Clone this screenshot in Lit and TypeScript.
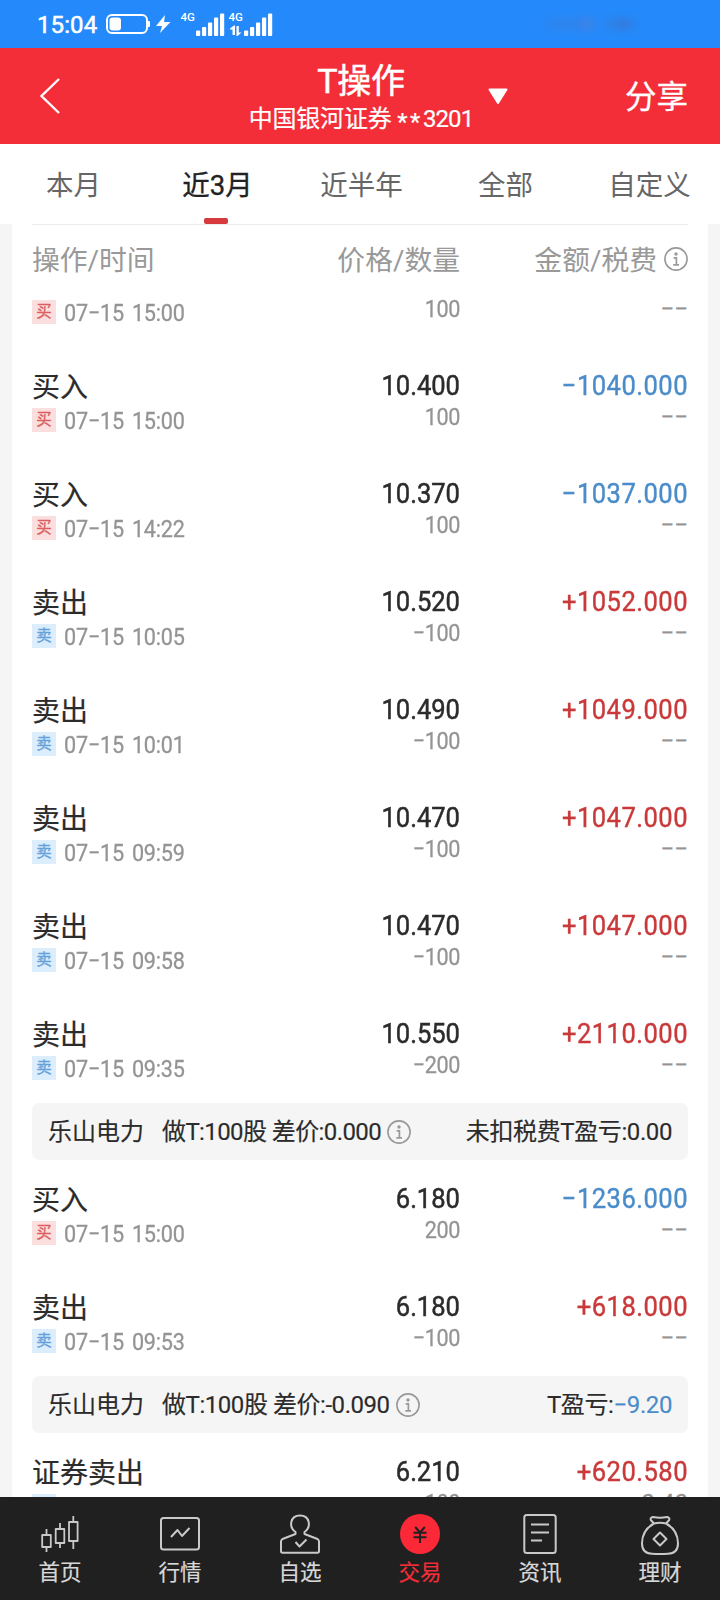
import { LitElement, html, css, svg, nothing } from "lit";
import { customElement, property } from "lit/decorators.js";

type Side = "buy" | "sell";
interface Trade { name: string; side: Side; time: string; price: string; qty: string; amount: string; fee: string; continued?: boolean; }
interface Summary { stock: string; detail: string; label: string; value: string; loss?: boolean; }
interface Group { trades: Trade[]; summary?: Summary; }

const buy = (time: string, price: string, qty: string, amount: string): Trade =>
  ({ name: "买入", side: "buy", time, price, qty, amount, fee: "−−" });
const sell = (time: string, price: string, qty: string, amount: string): Trade =>
  ({ name: "卖出", side: "sell", time, price, qty, amount, fee: "−−" });

const GROUPS: Group[] = [
  {
    trades: [
      { ...buy("07−15 15:00", "", "100", ""), continued: true },
      buy("07−15 15:00", "10.400", "100", "−1040.000"),
      buy("07−15 14:22", "10.370", "100", "−1037.000"),
      sell("07−15 10:05", "10.520", "−100", "+1052.000"),
      sell("07−15 10:01", "10.490", "−100", "+1049.000"),
      sell("07−15 09:59", "10.470", "−100", "+1047.000"),
      sell("07−15 09:58", "10.470", "−100", "+1047.000"),
      sell("07−15 09:35", "10.550", "−200", "+2110.000"),
    ],
    summary: { stock: "乐山电力", detail: "做T:100股 差价:0.000", label: "未扣税费T盈亏:", value: "0.00" },
  },
  {
    trades: [
      buy("07−15 15:00", "6.180", "200", "−1236.000"),
      sell("07−15 09:53", "6.180", "−100", "+618.000"),
    ],
    summary: { stock: "乐山电力", detail: "做T:100股 差价:-0.090", label: "T盈亏:", value: "−9.20", loss: true },
  },
  { trades: [{ ...sell("", "6.210", "100", "+620.580"), name: "证券卖出", fee: "0.40" }] },
];

const FONT = css`
  :host { font-family: Roboto, "Noto Sans CJK SC", sans-serif; }
  * { box-sizing: border-box; }
`;

@customElement("info-icon")
export class InfoIcon extends LitElement {
  static styles = css`:host { display: block; width: 24px; height: 24px; color: #999; } svg { display: block; }`;
  render() {
    return html`<svg width="24" height="24" viewBox="0 0 24 24" fill="none" stroke="currentColor">
      <circle cx="12" cy="12" r="11.1" stroke-width="1.6"/>
      <circle cx="12" cy="7" r="1.7" fill="currentColor" stroke="none"/>
      <path d="M9.6 10.8H12.4V17.4M9.3 17.8H15" stroke-width="1.7"/>
    </svg>`;
  }
}

@customElement("status-bar")
export class StatusBar extends LitElement {
  static styles = [FONT, css`
    :host { display: flex; align-items: center; height: 48px; background: #248afb; color: #fff; padding-left: 37px; }
    .time { width: 68px; font-size: 24px; line-height: 48px; padding-top: 1px; -webkit-text-stroke: .5px #fff; letter-spacing: 0.1px; white-space: nowrap; }
    svg { display: block; }
    .smudge { margin-left: 268px; width: 94px; height: 12px; filter: blur(4px); opacity: .4;
      background: linear-gradient(90deg, #2d82ec, #4a78cd 25%, #2f7fe0 35%, #7a72b8 45%, #2488fb 60%, #3d76c8 74%, #5060a8 88%, #2d82ec); }
  `];
  render() {
    const bars = (x: number) => [0, 1, 2, 3, 4].map((i) => {
      const h = [5.5, 9, 13.5, 18.5, 22.5][i];
      return svg`<rect x=${x + i * 6} y=${36 - h} width="4.2" height=${h} rx="1"/>`;
    });
    return html`
      <span class="time">15:04</span>
      <svg width="170" height="48" viewBox="105 0 170 48" fill="#fff">
        <rect x="107" y="15" width="40" height="18" rx="5" fill="none" stroke="#fff" stroke-width="2"/>
        <rect x="109.5" y="17.5" width="11.5" height="13" rx="3"/>
        <rect x="147.500" y="21" width="2.5" height="6" rx="1"/>
        <path d="M165 15L156 26H162L160 33L170.5 22H164Z"/>
        <text x="180.500" y="21" font-size="11.5" font-weight="500">4G</text>
        ${bars(196)}
        <text x="228.500" y="21" font-size="11.5" font-weight="500">4G</text>
        <path d="M230 28.500L234 25.500H235V35H232.500V29.500H230ZM236.500 26H238.800V32.500H241.500L237.500 36H236.500Z"/>
        ${bars(244)}
      </svg>
      <span class="smudge"></span>`;
  }
}

@customElement("title-bar")
export class TitleBar extends LitElement {
  static styles = [FONT, css`
    :host { display: grid; grid-template-columns: 224px 274px 1fr auto; align-items: center; height: 96px; background: #f32e38; color: #fff; padding-right: 32px; }
    .back { padding-left: 39px; }
    svg { display: block; }
    .mid { display: flex; flex-direction: column; align-items: center; height: 96px; padding-top: 12px; white-space: nowrap; }
    .title { font-size: 34px; line-height: 42px; -webkit-text-stroke: .5px #fff; letter-spacing: -.2px; }
    .acct { font-size: 24px; line-height: 34px; letter-spacing: -.2px; -webkit-text-stroke: .2px #fff; }
    .stars { letter-spacing: 2.5px; line-height: 1; vertical-align: -3px; }
    .num { letter-spacing: -.9px; }
    .arrow { margin-left: -10px; }
    .share { font-size: 31.5px; line-height: 40px; padding-top: 4px; -webkit-text-stroke: .3px #fff; }
  `];
  render() {
    return html`
      <div class="back"><svg width="22" height="38" viewBox="0 0 22 38" fill="none" stroke="#fff" stroke-width="2.4"><path d="M20 2L2.5 19L20 36"/></svg></div>
      <div class="mid"><div class="title">T操作</div><div class="acct">中国银河证券 <span class="stars">**</span><span class="num">3201</span></div></div>
      <div class="arrow"><svg width="20" height="17" viewBox="0 0 20 17" fill="#fff" stroke="#fff" stroke-width="2" stroke-linejoin="round"><path d="M1.5 1.5H18.5L10 15Z"/></svg></div>
      <div class="share">分享</div>`;
  }
}

@customElement("period-tabs")
export class PeriodTabs extends LitElement {
  static styles = [FONT, css`
    :host { display: grid; grid-template-columns: repeat(5, 1fr); height: 80px; background: #fff; }
    .tab { display: flex; flex-direction: column; align-items: center; justify-content: space-between; padding: 22px 0 0 3px; font-size: 27.5px; line-height: 40px; color: #666; }
    .on { color: #222; padding-left: 0; }
    .on .label { -webkit-text-stroke: .3px #222; padding-left: 3px; }
    .mark { width: 24px; height: 6px; border-radius: 2px; background: #d63a3c; }
  `];
  render() {
    return ["本月", "近3月", "近半年", "全部", "自定义"].map((t, i) => html`
      <div class="tab ${i === 1 ? "on" : ""}"><span class="label">${t}</span>${i === 1 ? html`<span class="mark"></span>` : nothing}</div>`);
  }
}

@customElement("trade-row")
export class TradeRow extends LitElement {
  @property({ attribute: false }) trade!: Trade;
  static styles = [FONT, css`
    :host { display: block; margin-bottom: 41px; }
    .row { display: grid; grid-template-columns: 228px 200px 1fr; white-space: nowrap; }
    .name { font-size: 28px; line-height: 43px; height: 43px; padding-top: 1px; color: #2b2b2b; -webkit-text-stroke: .2px currentColor; }
    .when { display: flex; align-items: center; gap: 8px; height: 24px; font-size: 24px; color: #949494; }
    .date { display: inline-block; transform: scaleX(.9); transform-origin: left; letter-spacing: -.2px; word-spacing: 3px; line-height: 24px; padding-top: 2px; -webkit-text-stroke: .3px currentColor; }
    .tag { width: 24px; height: 24px; font-size: 15.5px; line-height: 25px; text-align: center; -webkit-text-stroke: .3px currentColor; }
    .tag.buy { background: #fbdfdf; color: #d9605f; }
    .tag.sell { background: #dcedfc; color: #64a0da; }
    .col { text-align: right; }
    .big { font-size: 27.5px; line-height: 40px; height: 40px; padding-top: 1px; transform: scaleX(.93); transform-origin: right; -webkit-text-stroke: .5px currentColor; color: #2b2b2b; }
    .small { font-size: 24px; line-height: 24px; height: 24px; color: #949494; transform: scaleX(.9); transform-origin: right; -webkit-text-stroke: .3px currentColor; letter-spacing: -.4px; }
    .amt { -webkit-text-stroke: .4px currentColor; letter-spacing: .5px; }
    .amt.buy { color: #4a8cca; }
    .amt.sell { color: #c9393a; }
    .fee { transform: none; letter-spacing: 0; }
    .continued .small { margin-top: -3px; }
  `];
  render() {
    const t = this.trade;
    return html`<div class="row ${t.continued ? "continued" : ""}">
      <div>
        ${t.continued ? nothing : html`<div class="name">${t.name}</div>`}
        <div class="when"><span class="tag ${t.side}">${!t.time ? nothing : t.side === "buy" ? "买" : "卖"}</span><span class="date">${t.time}</span></div>
      </div>
      <div class="col">${t.continued ? nothing : html`<div class="big">${t.price}</div>`}<div class="small">${t.qty}</div></div>
      <div class="col">${t.continued ? nothing : html`<div class="big amt ${t.side}">${t.amount}</div>`}<div class="small fee">${t.fee}</div></div>
    </div>`;
  }
}

@customElement("group-summary")
export class GroupSummary extends LitElement {
  @property({ attribute: false }) data!: Summary;
  static styles = [FONT, css`
    :host { display: flex; align-items: center; height: 57px; margin: -18px 0 18px; padding: 0 16px; border-radius: 7px; background: #f5f5f5; font-size: 24px; line-height: 34px; color: #2b2b2b; white-space: nowrap; }
    span { -webkit-text-stroke: .15px currentColor; }
    .stock, .detail, .pl { padding-top: 1px; }
    .stock { width: 114px; }
    .detail { letter-spacing: -.6px; margin-right: 6px; }
    .detail.wide { letter-spacing: -.45px; }
    .pl { margin-left: auto; letter-spacing: -.4px; }
    .loss { color: #4a8cca; }
  `];
  render() {
    const d = this.data;
    return html`<span class="stock">${d.stock}</span><span class="detail ${d.loss ? "wide" : ""}">${d.detail}</span><info-icon></info-icon>
      <span class="pl">${d.label}<span class=${d.loss ? "loss" : ""}>${d.value}</span></span>`;
  }
}

const NAV_ICONS = [
  svg`<g stroke-width="1.800"><path d="M6.500 15V21M6.500 33V38M20 9V15M20 29V34M33.300 2V8M33.300 27V35"/><rect x="2.200" y="21" width="8.600" height="12"/><rect x="15.700" y="15" width="8.600" height="14"/><rect x="29" y="8" width="8.600" height="19"/></g>`,
  svg`<rect x="1" y="4" width="38" height="31.500" rx="2.500"/><path d="M11 23L17.500 16L22 22L29.500 14"/>`,
  svg`<path d="M15.500 18C8.500 13 10 1.500 20 1.500S31.500 13 24.500 18V20L37.500 25Q39 26 39 27.500V37Q39 38.800 37.500 38.800H2.500Q1 38.800 1 37V27.500Q1 26 2.500 25L15.500 20Z"/><path d="M15.500 28L19.500 32.500L26.500 25.500"/>`,
  svg`<circle cx="20" cy="20" r="20" fill="#fb2837" stroke="none"/><path d="M15.200 13L20 18.500L24.800 13M13.500 18.800H26.500M13.500 23.300H26.500M20 18.500V29" stroke="#202020"/>`,
  svg`<rect x="4.300" y="1" width="31.400" height="38" rx="2.500"/><path d="M11 10.500H29M11 18.500H29M11 26.500H22"/>`,
  svg`<path d="M14 9.500L10.800 6Q10 3.500 13 3Q20 4.500 27 3Q30 3.500 29.200 6L26 9.500M14 9.500C5.500 14 2 22 2 29.500Q2 39.500 12 39.800Q20 40.300 28 39.800Q38 39.500 38 29.500C38 22 34.500 14 26 9.500Q20 7.800 14 9.500Z"/><path d="M20 18.500L26.500 25L20 31.500L13.500 25Z"/>`,
];

@customElement("bottom-nav")
export class BottomNav extends LitElement {
  static styles = [FONT, css`
    :host { display: grid; grid-template-columns: repeat(6, 1fr); height: 103px; background: #202020; }
    .item { display: flex; flex-direction: column; align-items: center; padding-top: 17px; color: #d8d8d8; font-size: 21.5px; line-height: 30px; gap: 4px; }
    .item span { -webkit-text-stroke: .2px currentColor; }
    .on { color: #f32e38; }
    svg { display: block; overflow: visible; }
  `];
  render() {
    return ["首页", "行情", "自选", "交易", "资讯", "理财"].map((t, i) => html`
      <div class="item ${i === 3 ? "on" : ""}">
        <svg width="40" height="40" viewBox="0 0 40 40" fill="none" stroke="#c9c9c9" stroke-width="2" stroke-linejoin="round">${NAV_ICONS[i]}</svg>
        <span>${t}</span>
      </div>`);
  }
}

@customElement("app-root")
export class AppRoot extends LitElement {
  static styles = [FONT, css`
    :host { display: flex; flex-direction: column; width: 720px; height: 1600px; overflow: hidden; background: #f5f5f5; }
    .card { flex: 1; min-height: 0; display: flex; flex-direction: column; margin: 0 12px; padding: 0 20px; background: #fff; }
    .head { display: grid; grid-template-columns: 228px 200px 1fr; height: 68px; border-top: 1px solid #ececec; font-size: 27.8px; line-height: 71px; color: #999; white-space: nowrap; flex: none; }
    .r { text-align: right; }
    .fees { display: flex; justify-content: flex-end; gap: 7px; }
    .fees info-icon { margin-top: 22px; }
    .list { flex: 1; min-height: 0; overflow: hidden; padding-top: 8px; }
  `];
  render() {
    return html`
      <status-bar></status-bar>
      <title-bar></title-bar>
      <period-tabs></period-tabs>
      <div class="card">
        <div class="head"><span>操作/时间</span><span class="r">价格/数量</span><span class="fees"><span>金额/税费</span><info-icon></info-icon></span></div>
        <div class="list">
          ${GROUPS.map((g) => html`${g.trades.map((t) => html`<trade-row .trade=${t}></trade-row>`)}
            ${g.summary ? html`<group-summary .data=${g.summary}></group-summary>` : nothing}`)}
        </div>
      </div>
      <bottom-nav></bottom-nav>`;
  }
}
